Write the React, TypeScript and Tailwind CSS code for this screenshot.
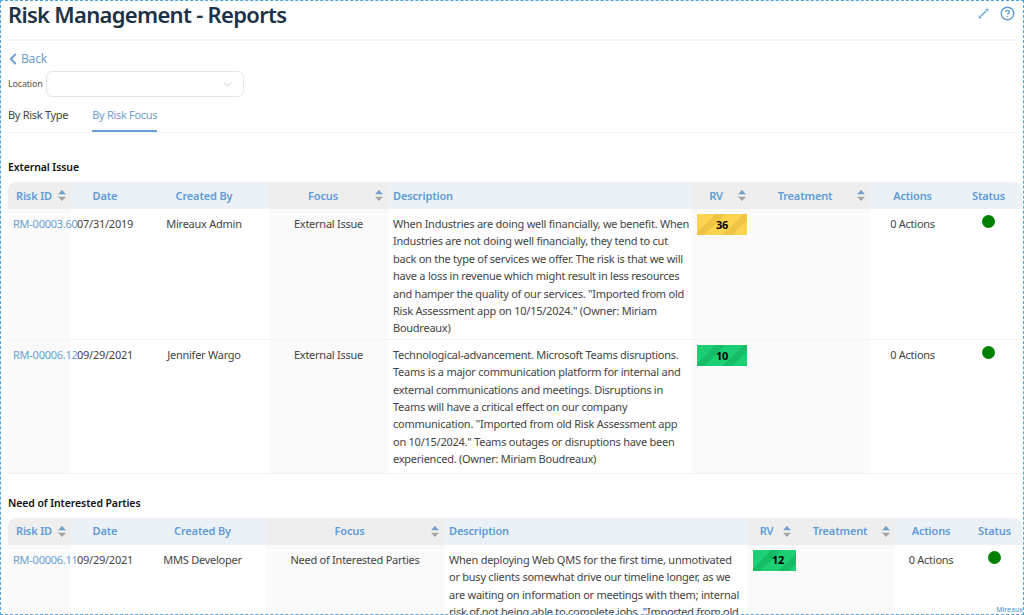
import { Fragment } from 'react'
import { ChevronLeft, ChevronDown, CircleHelp } from 'lucide-react'

type Row = {
  id: string
  date: string
  by: string
  focus: string
  desc: string
  rv: number
  color: 'yellow' | 'green'
}

type Col = { label: string; w: number; sort?: boolean; grey?: boolean; left?: boolean }

const makeCols = (w: number[]): Col[] => [
  { label: 'Risk ID', w: w[0], sort: true, grey: true },
  { label: 'Date', w: w[1] },
  { label: 'Created By', w: w[2] },
  { label: 'Focus', w: w[3], sort: true, grey: true },
  { label: 'Description', w: w[4], left: true },
  { label: 'RV', w: w[5], sort: true, grey: true },
  { label: 'Treatment', w: w[6], sort: true, grey: true },
  { label: 'Actions', w: w[7] },
  { label: 'Status', w: w[8] },
]

function SortIcon() {
  return (
    <svg width="8" height="11" viewBox="0 0 8 11" className="absolute right-[5px] top-[8px]">
      <path d="M4 0 L8 4.3 H0 Z" fill="#6f9fd0" />
      <path d="M4 11 L8 6.7 H0 Z" fill="#a3a3a3" />
    </svg>
  )
}

function RiskTable({ cols, rows, descPad }: { cols: Col[]; rows: Row[]; descPad: string }) {
  return (
    <table className="w-[1014px] table-fixed border-collapse text-[11px] leading-[17.4px] tracking-[-0.25px] text-[#444]">
      <colgroup>
        {cols.map((c) => (
          <col key={c.label} style={{ width: c.w }} />
        ))}
      </colgroup>
      <thead>
        <tr className="h-[27px]">
          {cols.map((c, i) => (
            <th
              key={c.label}
              className={`relative p-0 text-[11px] font-semibold tracking-[-0.15px] text-[#5f9bd6] ${c.grey ? 'bg-[#eeeeee]' : 'bg-[#ebf1f7]'} ${c.left ? 'pl-[5px] text-left' : 'text-center'} ${i === 0 ? 'rounded-tl-lg' : ''} ${i === cols.length - 1 ? 'rounded-tr-lg' : ''}`}
            >
              <span className={c.sort ? 'pr-[11px]' : ''}>{c.label}</span>
              {c.sort && <SortIcon />}
            </th>
          ))}
        </tr>
      </thead>
      <tbody>
        {rows.map((r) => (
          <tr key={r.id} className="border-b border-[#f3f3f3] align-top">
            <td className="whitespace-nowrap bg-[#fafafa] pt-[6px] pl-[5px] text-[#6c9fd2]">{r.id}</td>
            <td className="pt-[6px] pl-[6px] whitespace-nowrap">{r.date}</td>
            <td className="pt-[6px] text-center">{r.by}</td>
            <td className="bg-[#fafafa] pt-[6px] text-center">{r.focus}</td>
            <td className={`pt-[6px] pb-[2px] pl-[5px] [tr:last-child>&]:pb-[5px] ${descPad}`}>{r.desc}</td>
            <td className="bg-[#fafafa] pt-[5px] pl-[5px]">
              <div
                className={`flex h-[21px] w-[50px] items-center justify-center text-[11px] font-bold text-black ${
                  r.color === 'yellow'
                    ? 'bg-[repeating-linear-gradient(135deg,#fdd44f_0px,#fdd44f_13px,#efc344_13px,#efc344_20px)]'
                    : 'bg-[repeating-linear-gradient(135deg,#1ccf73_0px,#1ccf73_13px,#17bd66_13px,#17bd66_20px)]'
                }`}
              >
                {r.rv}
              </div>
            </td>
            <td className="bg-[#fafafa]" />
            <td className="pt-[6px] text-center">0 Actions</td>
            <td className="pt-[6px]">
              <div className="mx-auto h-[13px] w-[13px] rounded-full bg-[#008000]" />
            </td>
          </tr>
        ))}
      </tbody>
    </table>
  )
}

const external: Row[] = [
  {
    id: 'RM-00003.60',
    date: '07/31/2019',
    by: 'Mireaux Admin',
    focus: 'External Issue',
    desc: 'When Industries are doing well financially, we benefit. When Industries are not doing well financially, they tend to cut back on the type of services we offer. The risk is that we will have a loss in revenue which might result in less resources and hamper the quality of our services. "Imported from old Risk Assessment app on 10/15/2024." (Owner: Miriam Boudreaux)',
    rv: 36,
    color: 'yellow',
  },
  {
    id: 'RM-00006.12',
    date: '09/29/2021',
    by: 'Jennifer Wargo',
    focus: 'External Issue',
    desc: 'Technological-advancement. Microsoft Teams disruptions. Teams is a major communication platform for internal and external communications and meetings. Disruptions in Teams will have a critical effect on our company communication. "Imported from old Risk Assessment app on 10/15/2024." Teams outages or disruptions have been experienced. (Owner: Miriam Boudreaux)',
    rv: 10,
    color: 'green',
  },
]

const parties: Row[] = [
  {
    id: 'RM-00006.11',
    date: '09/29/2021',
    by: 'MMS Developer',
    focus: 'Need of Interested Parties',
    desc: 'When deploying Web QMS for the first time, unmotivated or busy clients somewhat drive our timeline longer, as we are waiting on information or meetings with them; internal risk of not being able to complete jobs. "Imported from old Risk Assessment app on 10/15/2024."',
    rv: 12,
    color: 'green',
  },
]

const sections = [
  { title: 'External Issue', cols: makeCols([63, 68, 130, 119, 304, 59, 119, 85, 67]), rows: external, descPad: 'pr-[3px]' },
  { title: 'Need of Interested Parties', cols: makeCols([63, 68, 127, 178, 304, 48, 99, 72, 55]), rows: parties, descPad: 'pr-[6px]' },
]

export default function App() {
  return (
    <div className="relative h-[615px] w-[1024px] overflow-hidden border border-dashed border-[#4aa3e0] bg-white font-['Noto_Sans',sans-serif]">
      <header className="mx-[7px] flex h-[40px] items-start justify-between border-b-2 border-[#edf2f7]">
        <h1 className="-mt-px text-[22px] leading-[28px] font-semibold tracking-[-0.7px] text-[#1d3247]">Risk Management - Reports</h1>
        <div className="flex items-center gap-[11px] pt-[5px] pr-[1px] text-[#5f9bd6]">
          <svg width="11" height="11" viewBox="0 0 11 11" fill="none" stroke="currentColor" strokeWidth="1.2">
            <path d="M3 8 L8 3" />
            <path d="M7 0.8 H10.2 V4 Z" fill="currentColor" stroke="none" />
            <path d="M0.8 7 V10.2 H4 Z" fill="currentColor" stroke="none" />
          </svg>
          <CircleHelp className="h-[15px] w-[15px]" strokeWidth={2.2} />
        </div>
      </header>

      <div className="px-[7px]">
        <a className="mt-[9px] flex items-center text-[12px] leading-[18px] tracking-[-0.2px] text-[#6c9fd2]">
          <ChevronLeft className="-ml-[4px] h-[18px] w-[18px]" strokeWidth={2.5} />
          <span className="-ml-[1px]">Back</span>
        </a>
        <div className="mt-[3px] flex items-center gap-[3px]">
          <label className="text-[9px] tracking-[-0.2px] text-[#555]">Location</label>
          <div className="flex h-[26px] w-[198px] items-center justify-end rounded-md border border-[#e6e6e6] pr-[9px]">
            <ChevronDown className="h-[13px] w-[13px] text-[#bdbdbd]" strokeWidth={1.5} />
          </div>
        </div>
        <div className="mt-[3px] flex h-[33px] gap-[24px] border-b border-[#f3f3f3] text-[11px] tracking-[-0.3px]">
          <div className="pt-[7px] text-[#444]">By Risk Type</div>
          <div className="border-b-2 border-[#6c9fd2] pt-[7px] text-[#6c9fd2]">By Risk Focus</div>
        </div>

        {sections.map((s, i) => (
          <Fragment key={s.title}>
            <h2 className={`text-[10.5px] leading-[15px] font-semibold tracking-[-0.1px] text-[#111] mb-[7px] ${i === 0 ? 'mt-[27px]' : 'mt-[22px]'}`}>
              {s.title}
            </h2>
            <RiskTable cols={s.cols} rows={s.rows} descPad={s.descPad} />
          </Fragment>
        ))}
      </div>

      <span className="absolute right-0 bottom-0 text-[7px] leading-[9px] text-[#4a90c8]">Mireaux</span>
    </div>
  )
}
